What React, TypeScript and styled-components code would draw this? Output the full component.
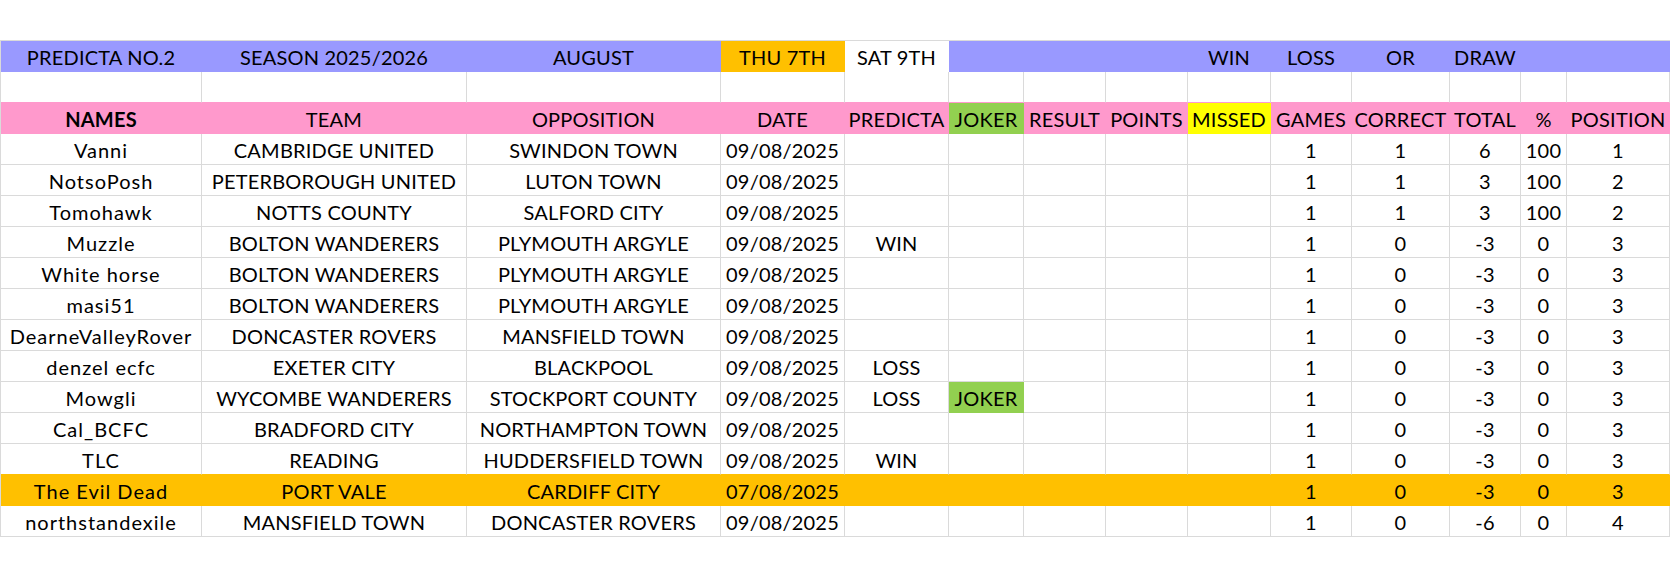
import React from 'react'
import styled, { createGlobalStyle } from 'styled-components'

const GRID = '#DADADA'
const PURPLE = '#9999FF'
const PINK = '#FF99CC'
const ORANGE = '#FFC000'
const GREEN = '#92D050'
const YELLOW = '#FFFF00'
const WHITE = '#FFFFFF'

// column widths in px, NAMES .. POSITION
const COLS = [201, 265, 254, 124, 104, 75, 82, 82, 83, 81, 98, 71, 46, 103]

const GlobalStyle = createGlobalStyle`
  body {
    margin: 0;
    background: #fff;
    color: #000;
    font-family: Lato, "Open Sans", sans-serif;
  }
`

const Page = styled.div`
  padding-top: 40px;
`

const Sheet = styled.div`
  width: 1670px;
  border-top: 1px solid ${GRID};
  border-left: 1px solid ${GRID};
  box-sizing: border-box;
`

const Row = styled.div`
  display: grid;
  grid-template-columns: ${COLS.map(w => `${w}px`).join(' ')};
  height: 31px;
`

const Cell = styled.div<{ $fill?: string; $edge?: string; $bold?: boolean; $loose?: boolean }>`
  display: flex;
  align-items: center;
  justify-content: center;
  box-sizing: border-box;
  height: 31px;
  padding-top: 1px;
  border-right: 1px solid ${p => p.$fill ?? GRID};
  border-bottom: 1px solid ${p => p.$edge ?? p.$fill ?? GRID};
  background: ${p => p.$fill ?? 'transparent'};
  font-size: 20px;
  font-weight: ${p => (p.$bold ? 700 : 400)};
  letter-spacing: ${p => (p.$loose ? '1px' : '0.2px')};
  white-space: nowrap;
`

type Entry = {
  name: string
  team: string
  opp: string
  date: string
  predicta?: string
  joker?: boolean
  games: number
  correct: number
  total: number
  pct: number
  pos: number
  highlight?: boolean
}

const entries: Entry[] = [
  { name: 'Vanni', team: 'CAMBRIDGE UNITED', opp: 'SWINDON TOWN', date: '09/08/2025', games: 1, correct: 1, total: 6, pct: 100, pos: 1 },
  { name: 'NotsoPosh', team: 'PETERBOROUGH UNITED', opp: 'LUTON TOWN', date: '09/08/2025', games: 1, correct: 1, total: 3, pct: 100, pos: 2 },
  { name: 'Tomohawk', team: 'NOTTS COUNTY', opp: 'SALFORD CITY', date: '09/08/2025', games: 1, correct: 1, total: 3, pct: 100, pos: 2 },
  { name: 'Muzzle', team: 'BOLTON WANDERERS', opp: 'PLYMOUTH ARGYLE', date: '09/08/2025', predicta: 'WIN', games: 1, correct: 0, total: -3, pct: 0, pos: 3 },
  { name: 'White horse', team: 'BOLTON WANDERERS', opp: 'PLYMOUTH ARGYLE', date: '09/08/2025', games: 1, correct: 0, total: -3, pct: 0, pos: 3 },
  { name: 'masi51', team: 'BOLTON WANDERERS', opp: 'PLYMOUTH ARGYLE', date: '09/08/2025', games: 1, correct: 0, total: -3, pct: 0, pos: 3 },
  { name: 'DearneValleyRover', team: 'DONCASTER ROVERS', opp: 'MANSFIELD TOWN', date: '09/08/2025', games: 1, correct: 0, total: -3, pct: 0, pos: 3 },
  { name: 'denzel ecfc', team: 'EXETER CITY', opp: 'BLACKPOOL', date: '09/08/2025', predicta: 'LOSS', games: 1, correct: 0, total: -3, pct: 0, pos: 3 },
  { name: 'Mowgli', team: 'WYCOMBE WANDERERS', opp: 'STOCKPORT COUNTY', date: '09/08/2025', predicta: 'LOSS', joker: true, games: 1, correct: 0, total: -3, pct: 0, pos: 3 },
  { name: 'Cal_BCFC', team: 'BRADFORD CITY', opp: 'NORTHAMPTON TOWN', date: '09/08/2025', games: 1, correct: 0, total: -3, pct: 0, pos: 3 },
  { name: 'TLC', team: 'READING', opp: 'HUDDERSFIELD TOWN', date: '09/08/2025', predicta: 'WIN', games: 1, correct: 0, total: -3, pct: 0, pos: 3 },
  { name: 'The Evil Dead', team: 'PORT VALE', opp: 'CARDIFF CITY', date: '07/08/2025', games: 1, correct: 0, total: -3, pct: 0, pos: 3, highlight: true },
  { name: 'northstandexile', team: 'MANSFIELD TOWN', opp: 'DONCASTER ROVERS', date: '09/08/2025', games: 1, correct: 0, total: -6, pct: 0, pos: 4 },
]

const titles = ['PREDICTA NO.2', 'SEASON 2025/2026', 'AUGUST', 'THU 7TH', 'SAT 9TH', '', '', '', 'WIN', 'LOSS', 'OR', 'DRAW', '', '']
const titleFills = [PURPLE, PURPLE, PURPLE, ORANGE, WHITE, PURPLE, PURPLE, PURPLE, PURPLE, PURPLE, PURPLE, PURPLE, PURPLE, PURPLE]

const headers = ['NAMES', 'TEAM', 'OPPOSITION', 'DATE', 'PREDICTA', 'JOKER', 'RESULT', 'POINTS', 'MISSED', 'GAMES', 'CORRECT', 'TOTAL', '%', 'POSITION']
const headerFill = (h: string) => (h === 'JOKER' ? GREEN : h === 'MISSED' ? YELLOW : PINK)

const App = () => {
  return (
    <Page>
      <GlobalStyle />
      <Sheet>
        <Row>
          {titles.map((t, i) => (
            <Cell key={i} $fill={titleFills[i]}>{t}</Cell>
          ))}
        </Row>
        <Row>
          {COLS.map((_, i) => (
            <Cell key={i} $edge={PINK} />
          ))}
        </Row>
        <Row>
          {headers.map(h => (
            <Cell key={h} $fill={headerFill(h)} $bold={h === 'NAMES'}>{h}</Cell>
          ))}
        </Row>
        {entries.map((e, idx) => {
          const fill = e.highlight ? ORANGE : undefined
          const edge = entries[idx + 1]?.highlight ? ORANGE : undefined
          const cells = [
            e.name, e.team, e.opp, e.date, e.predicta ?? '', e.joker ? 'JOKER' : '', '', '', '',
            e.games, e.correct, e.total, e.pct, e.pos,
          ]
          return (
            <Row key={e.name}>
              {cells.map((c, i) => (
                <Cell
                  key={i}
                  $fill={i === 5 && e.joker ? GREEN : fill}
                  $edge={fill ? undefined : edge}
                  $loose={i === 0}
                >
                  {c}
                </Cell>
              ))}
            </Row>
          )
        })}
      </Sheet>
    </Page>
  )
}

export default App
